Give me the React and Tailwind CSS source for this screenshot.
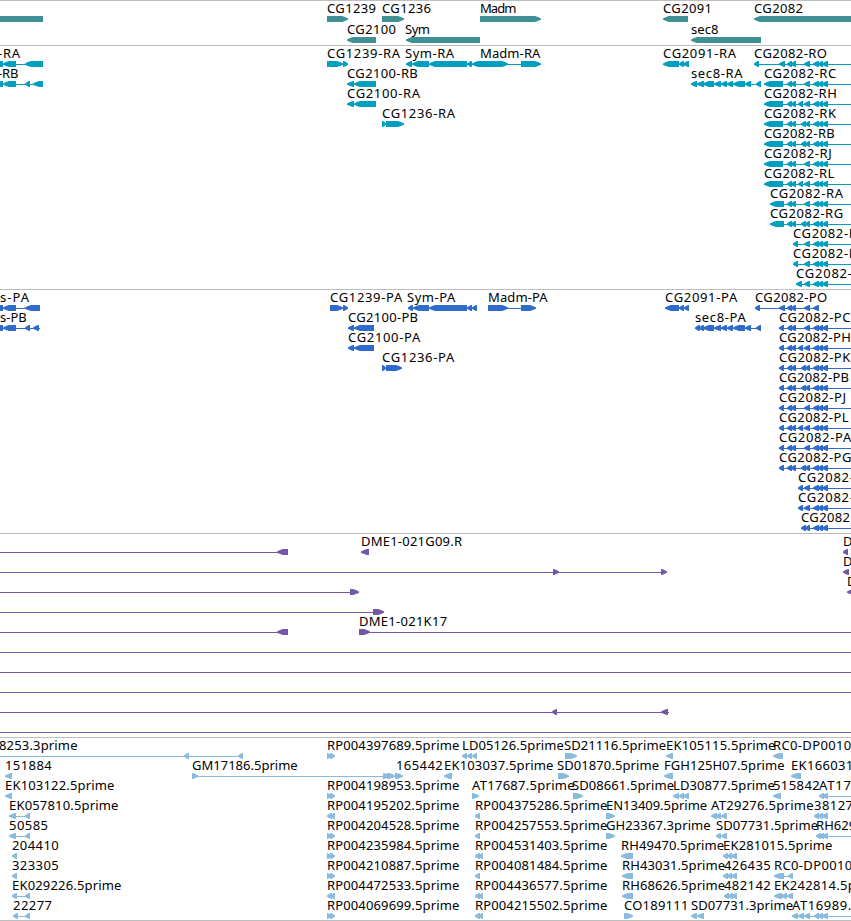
import React from 'react';

const VIEW_WIDTH = 851;

// label: [x, text, optional width]
// feature: [direction, exons as start/end pairs, optional intron line start/end]
const L = '<';
const R = '>';

const TAIL = [813, 819, 818, 823, 822, 828];
const PAIR = [787, 792, 791, 796];
const ONE = [804, 810];
const TWO = [801, 806, 805, 810];
const SPLIT = [798, 803, 804, 810];

// advance widths of the label characters, in pixels
const DIGIT = 7.8;
const ADVANCE = {
  '-': 7, '.': 4, A: 9.3, B: 7, C: 8.4, D: 9, E: 7, F: 6.8, G: 9.4, H: 9, J: 4, K: 8.3, L: 6.6, M: 10,
  O: 9.2, P: 7, R: 7.8, S: 6.7, T: 7, a: 7, c: 6.4, d: 7.6, e: 7.4, i: 3.4, m: 11.7, p: 7.8, r: 5.2, s: 5.8, y: 6.6,
};

const genes = [
  {
    labels: [[327, 'CG1239'], [382, 'CG1236'], [480, 'Madm'], [663, 'CG2091'], [754, 'CG2082']],
    features: [[L, [-20, 43]], [R, [327, 348]], [R, [382, 404]], [R, [480, 541]], [L, [663, 688]], [L, [754, 880]]],
  },
  {
    labels: [[347, 'CG2100'], [405, 'Sym'], [691, 'sec8']],
    features: [[L, [347, 376]], [L, [406, 480]], [L, [691, 761]]],
  },
];

const transcripts = [
  {
    labels: [[-2, '-RA', 22], [327, 'CG1239-RA'], [405, 'Sym-RA'], [480, 'Madm-RA'], [663, 'CG2091-RA'], [754, 'CG2082-RO']],
    features: [
      [L, [-12, 3, 3, 16, 25, 43], [0, 43]],
      [R, [327, 331, 329, 343, 343, 348], [327, 348]],
      [L, [406, 412, 412, 429, 429, 467, 467, 472, 472, 481], [406, 480]],
      [R, [480, 508, 521, 541], [480, 541]],
      [L, [663, 679, 679, 684, 683, 689], [663, 689]],
      [L, [754, 759, 779, 785, ...PAIR, ...ONE, ...TAIL], [754, 851]],
    ],
  },
  {
    labels: [[-2, '-RB', 20.5], [347, 'CG2100-RB'], [691, 'sec8-RA'], [764, 'CG2082-RC']],
    features: [
      [L, [-12, 3, 3, 16, 25, 30, 33, 43], [0, 43]],
      [L, [347, 354, 354, 376], [347, 376]],
      [L, [691, 697, 697, 704, 703, 714, 714, 721, 721, 727, 727, 733, 733, 745, 745, 751, 756, 761], [691, 761]],
      [L, [764, 783, ...PAIR, ...ONE, ...TAIL], [764, 851]],
    ],
  },
  {
    labels: [[347, 'CG2100-RA'], [764, 'CG2082-RH']],
    features: [
      [L, [347, 354, 354, 376], [347, 376]],
      [L, [764, 783, ...PAIR, ...SPLIT, ...TAIL], [764, 851]],
    ],
  },
  {
    labels: [[382, 'CG1236-RA'], [764, 'CG2082-RK']],
    features: [
      [R, [382, 386, 386, 404], [382, 404]],
      [L, [764, 783, ...PAIR, ...TWO, ...TAIL], [764, 851]],
    ],
  },
  { labels: [[764, 'CG2082-RB']], features: [[L, [764, 783, ...PAIR, ...TWO, ...TAIL], [764, 851]]] },
  { labels: [[764, 'CG2082-RJ']], features: [[L, [764, 783, ...PAIR, ...ONE, ...TAIL], [764, 851]]] },
  { labels: [[764, 'CG2082-RL']], features: [[L, [764, 783, ...PAIR, ...SPLIT, ...TAIL], [764, 851]]] },
  { labels: [[770, 'CG2082-RA']], features: [[L, [770, 784, ...PAIR, ...ONE, ...TAIL], [770, 851]]] },
  { labels: [[770, 'CG2082-RG']], features: [[L, [770, 784, ...PAIR, ...TWO, ...TAIL], [770, 851]]] },
  { labels: [[793, 'CG2082-R']], features: [[L, [793, 798, ...ONE, ...TAIL], [793, 851]]] },
  { labels: [[793, 'CG2082-R']], features: [[L, [793, 798, ...ONE, ...TAIL], [793, 851]]] },
  { labels: [[796, 'CG2082-']], features: [[L, [796, 802, ...ONE, ...TAIL], [796, 851]]] },
];

const proteins = [
  {
    labels: [[0, 's-PA'], [330, 'CG1239-PA'], [407, 'Sym-PA'], [488, 'Madm-PA'], [665, 'CG2091-PA'], [755, 'CG2082-PO']],
    features: [
      [L, [-12, 3, 3, 16, 25, 40], [0, 40]],
      [R, [330, 343, 343, 348], [330, 348]],
      [L, [408, 413, 413, 429, 429, 467, 467, 472, 472, 477], [408, 477]],
      [R, [488, 508, 521, 536], [488, 536]],
      [L, [665, 679, 679, 684, 684, 689], [665, 689]],
      [L, [755, 760, 779, 785, ...PAIR, ...ONE, 813, 819], [755, 819]],
    ],
  },
  {
    labels: [[0, 's-PB'], [348, 'CG2100-PB'], [695, 'sec8-PA'], [779, 'CG2082-PC']],
    features: [
      [L, [-12, 3, 3, 16, 25, 30, 33, 39], [0, 40]],
      [L, [348, 354, 354, 374], [348, 374]],
      [L, [695, 700, 699, 704, 703, 714, 714, 721, 721, 727, 727, 733, 733, 745, 745, 751, 756, 761], [695, 761]],
      [L, [779, 784, ...PAIR, ...ONE, ...TAIL], [779, 851]],
    ],
  },
  {
    labels: [[348, 'CG2100-PA'], [779, 'CG2082-PH']],
    features: [
      [L, [348, 354, 354, 374], [348, 374]],
      [L, [779, 784, ...PAIR, ...SPLIT, ...TAIL], [779, 851]],
    ],
  },
  {
    labels: [[382, 'CG1236-PA'], [779, 'CG2082-PK']],
    features: [
      [R, [382, 386, 386, 402], [382, 402]],
      [L, [779, 784, ...PAIR, ...TWO, ...TAIL], [779, 851]],
    ],
  },
  { labels: [[779, 'CG2082-PB']], features: [[L, [779, 784, ...PAIR, ...TWO, ...TAIL], [779, 851]]] },
  { labels: [[779, 'CG2082-PJ']], features: [[L, [779, 784, ...PAIR, ...ONE, ...TAIL], [779, 851]]] },
  { labels: [[779, 'CG2082-PL']], features: [[L, [779, 784, ...PAIR, ...SPLIT, ...TAIL], [779, 851]]] },
  { labels: [[779, 'CG2082-PA']], features: [[L, [779, 784, ...PAIR, ...ONE, ...TAIL], [779, 851]]] },
  { labels: [[779, 'CG2082-PG']], features: [[L, [779, 784, ...PAIR, ...TWO, ...TAIL], [779, 851]]] },
  { labels: [[798, 'CG2082-']], features: [[L, [...SPLIT, ...TAIL], [798, 851]]] },
  { labels: [[798, 'CG2082-']], features: [[L, [...SPLIT, ...TAIL], [798, 851]]] },
  { labels: [[801, 'CG2082']], features: [[L, [...TWO, ...TAIL], [801, 851]]] },
];

const bacEnds = [
  {
    labels: [[361, 'DME1-021G09.R'], [843, 'D']],
    features: [[L, [277, 288], [0, 288]], [L, [361, 369]], [L, [843, 848]]],
  },
  { labels: [[843, 'D']], features: [[R, [553, 559, 661, 667], [0, 666]], [L, [843, 849]]] },
  { labels: [[847, 'D']], features: [[R, [350, 359], [0, 359]], [L, [847, 854]]] },
  { labels: [], features: [[R, [373, 384], [0, 384]]] },
  { labels: [[359, 'DME1-021K17']], features: [[L, [277, 288], [0, 288]], [R, [359, 370], [359, 851]]] },
  { labels: [], features: [[R, [], [0, 851]]] },
  { labels: [], features: [[R, [], [0, 851]]] },
  { labels: [], features: [[R, [], [0, 851]]] },
  { labels: [], features: [[L, [552, 557, 661, 668], [0, 669]]] },
  { labels: [], features: [[L, [], [0, 851]]] },
];

const ests = [
  {
    labels: [[-1, '8253.3prime'], [327, 'RP004397689.5prime'], [462, 'LD05126.5prime'], [564, 'SD21116.5prime'], [666, 'EK105115.5prime'], [773, 'RC0-DP0010']],
    features: [
      [L, [184, 189, 238, 243], [0, 243]],
      [R, [327, 331, 330, 335]],
      [L, [462, 467, 467, 472, 472, 477]],
      [R, [565, 577]],
      [L, [666, 673]],
      [L, [773, 783]],
    ],
  },
  {
    labels: [[5, '151884'], [192, 'GM17186.5prime'], [396, '165442'], [444, 'EK103037.5prime'], [557, 'SD01870.5prime'], [664, 'FGH125H07.5prime'], [791, 'EK166031']],
    features: [
      [L, [5, 12]],
      [R, [192, 198, 383, 389, 387, 395, 395, 403], [192, 403]],
      [L, [444, 452]],
      [R, [558, 569]],
      [L, [664, 673]],
      [L, [791, 801]],
    ],
  },
  {
    labels: [[5, 'EK103122.5prime'], [327, 'RP004198953.5prime'], [472, 'AT17687.5prime'], [572, 'SD08661.5prime'], [673, 'LD30877.5prime'], [773, '515842'], [819, 'AT17']],
    features: [
      [L, [5, 12]],
      [R, [327, 331, 330, 335]],
      [R, [472, 479]],
      [R, [573, 583]],
      [L, [673, 679, 679, 684, 683, 689], [673, 689]],
      [L, [773, 781]],
      [L, [819, 824, 822, 828], [819, 851]],
    ],
  },
  {
    labels: [[9, 'EK057810.5prime'], [327, 'RP004195202.5prime'], [475, 'RP004375286.5prime'], [606, 'EN13409.5prime'], [711, 'AT29276.5prime'], [814, '38127']],
    features: [
      [L, [9, 16, 25, 30], [9, 30]],
      [L, [327, 332, 331, 335]],
      [L, [475, 480]],
      [R, [606, 615]],
      [L, [711, 717, 716, 721, 721, 727], [711, 727]],
      [L, [814, 819, 818, 823, 822, 828]],
    ],
  },
  {
    labels: [[9, '50585'], [327, 'RP004204528.5prime'], [475, 'RP004257553.5prime'], [606, 'GH23367.3prime'], [716, 'SD07731.5prime'], [816, 'RH629']],
    features: [
      [L, [9, 16, 25, 30], [9, 30]],
      [R, [327, 331, 330, 335]],
      [L, [475, 480]],
      [R, [606, 615]],
      [L, [716, 721, 721, 727]],
      [L, [816, 821, 819, 824, 822, 828], [816, 851]],
    ],
  },
  {
    labels: [[12, '204410'], [327, 'RP004235984.5prime'], [475, 'RP004531403.5prime'], [621, 'RH49470.5prime'], [723, 'EK281015.5prime']],
    features: [
      [L, [12, 17]],
      [R, [327, 331, 330, 335]],
      [L, [475, 480, 479, 483]],
      [L, [621, 633]],
      [L, [723, 728, 727, 732, 731, 737]],
    ],
  },
  {
    labels: [[12, '323305'], [327, 'RP004210887.5prime'], [475, 'RP004081484.5prime'], [622, 'RH43031.5prime'], [724, '426435'], [774, 'RC0-DP0010']],
    features: [
      [L, [12, 17]],
      [R, [327, 331, 330, 335]],
      [L, [475, 480]],
      [L, [622, 633]],
      [L, [723, 728, 727, 732, 731, 737]],
      [L, [774, 784, 788, 793], [774, 793]],
    ],
  },
  {
    labels: [[12, 'EK029226.5prime'], [327, 'RP004472533.5prime'], [475, 'RP004436577.5prime'], [622, 'RH68626.5prime'], [724, '482142'], [774, 'EK242814.5p']],
    features: [
      [L, [12, 17, 25, 30], [12, 30]],
      [L, [327, 332, 331, 335]],
      [L, [475, 480, 479, 483]],
      [L, [622, 633]],
      [L, [724, 729, 728, 733, 732, 737]],
      [L, [774, 782, 781, 787, 787, 793], [774, 793]],
    ],
  },
  {
    labels: [[13, '22277'], [327, 'RP004069699.5prime'], [475, 'RP004215502.5prime'], [624, 'CO189111'], [691, 'SD07731.3prime'], [792, 'AT16989.']],
    features: [
      [L, [13, 18, 25, 30], [13, 30]],
      [R, [327, 331, 330, 335]],
      [L, [475, 480, 479, 483]],
      [R, [624, 633]],
      [L, [691, 697, 697, 704]],
      [L, [792, 798, 798, 804, 804, 810, 814, 819, 818, 823, 822, 828], [792, 851]],
    ],
  },
];

function labelWidth(text) {
  return [...text].reduce((sum, ch) => sum + (ADVANCE[ch] ?? DIGIT), 0);
}

function exonPoints(dir, a, b) {
  const head = Math.min(b - a - 1, 6);
  // the base of the head, its shoulder and the blunt tip
  const [back, base, mid, tip] =
    dir === L ? [b, a + head, a + head / 2, a] : [a, b - head, b - head / 2, b];
  return `${back},15 ${base},15 ${mid},16 ${tip},17.6 ${tip},18.8 ${mid},20 ${base},21 ${back},21`;
}

function Feature({ feature }) {
  const [dir, exons, line] = feature;
  const pairs = [];
  for (let i = 0; i < exons.length; i += 2) {
    pairs.push([exons[i], exons[i + 1]]);
  }
  return (
    <g fill="currentColor">
      {line && <rect x={line[0]} y="18" width={line[1] - line[0]} height="1" />}
      {pairs.map(([a, b], i) => (
        <polygon key={i} points={exonPoints(dir, a, b)} />
      ))}
    </g>
  );
}

function Lane({ lane, tall }) {
  return (
    <svg width={VIEW_WIDTH} height={tall ? 21 : 20} className="block shrink-0 overflow-visible">
      {lane.features.map((feature, i) => (
        <Feature key={i} feature={feature} />
      ))}
      {lane.labels.map(([x, text, width], i) => (
        <text key={i} x={x} y="12" textLength={width ?? labelWidth(text)} className="fill-black">
          {text}
        </text>
      ))}
    </svg>
  );
}

function Track({ lanes, className, tall }) {
  return (
    <section className={`flex flex-col border-t border-[#bebebe] overflow-hidden ${className}`}>
      {lanes.map((lane, i) => (
        <Lane key={i} lane={lane} tall={tall} />
      ))}
    </section>
  );
}

function App() {
  return (
    <main className="w-[851px] h-[921px] overflow-hidden bg-white font-['Noto_Sans',sans-serif] text-[13px] border-b border-[#bebebe]">
      <Track lanes={genes} tall className="h-[45px] text-[#3f8f94]" />
      <Track lanes={transcripts} className="h-[244px] text-[#009fc0]" />
      <Track lanes={proteins} className="h-[244px] text-[#2f6bcb]" />
      <Track lanes={bacEnds} className="h-[204px] text-[#7358a5]" />
      <Track lanes={ests} className="h-[183px] text-[#88bbdd]" />
    </main>
  );
}

export default App;
